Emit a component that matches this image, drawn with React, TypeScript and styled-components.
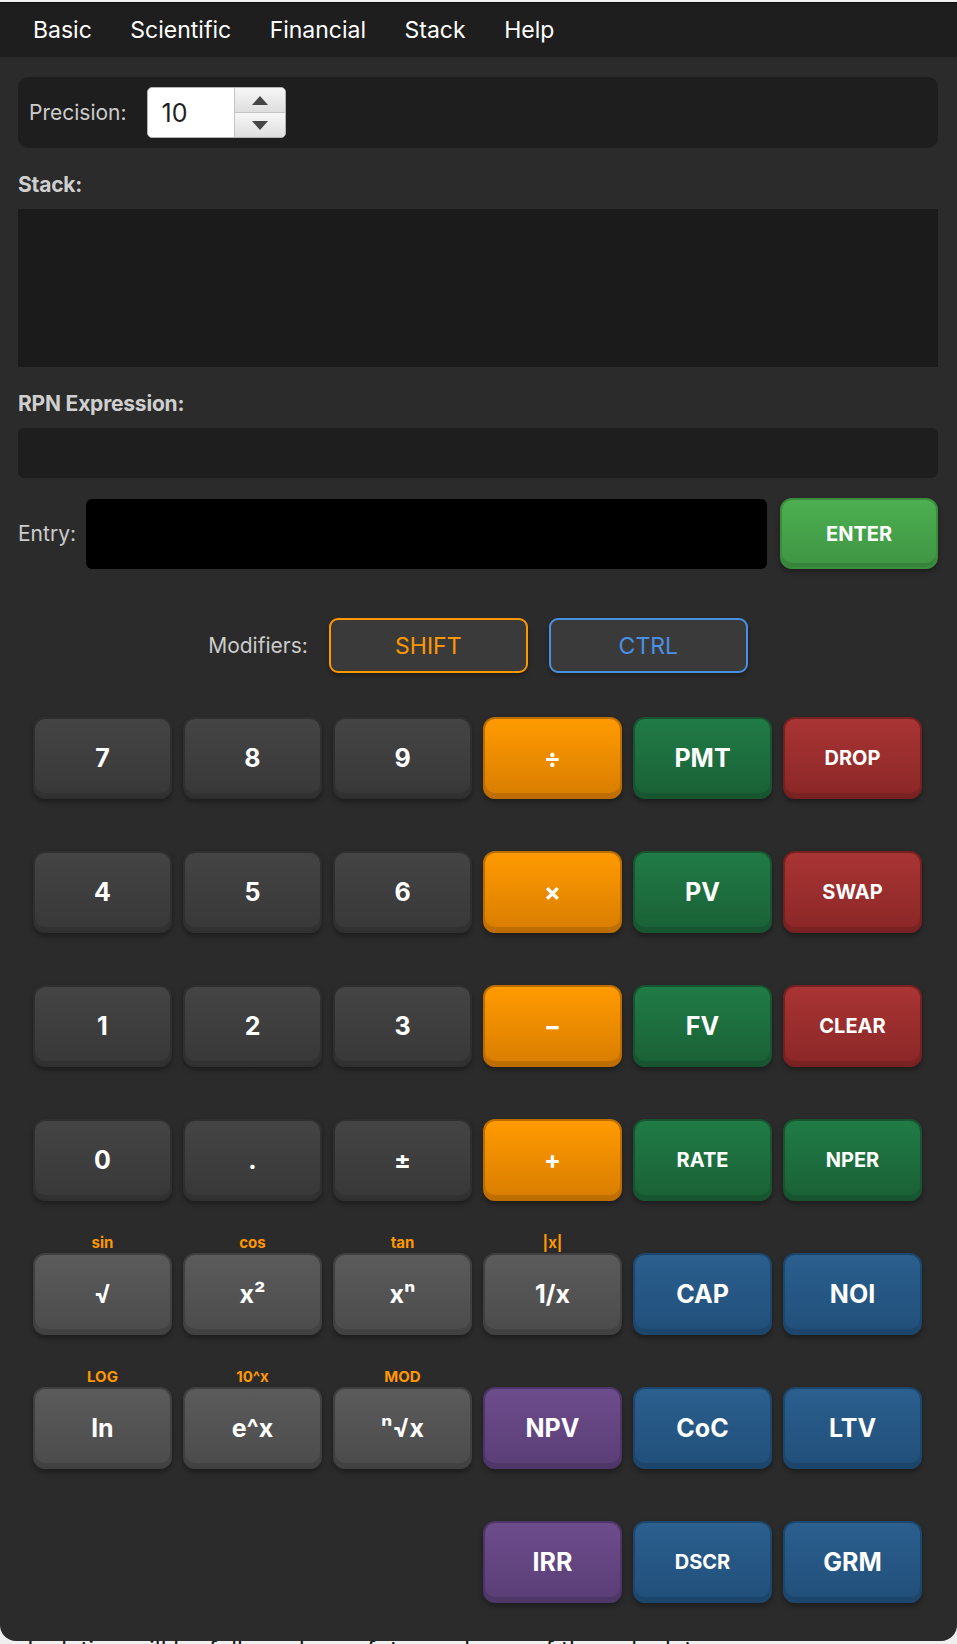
import React from 'react';
import styled, { createGlobalStyle } from 'styled-components';

const GlobalStyle = createGlobalStyle`
  html, body {
    margin: 0;
    padding: 0;
    background: #efefef;
  }
  body {
    font-family: Inter, "Noto Sans", "DejaVu Sans", sans-serif;
  }
  * {
    box-sizing: border-box;
  }
`;

const Window = styled.div`
  position: relative;
  z-index: 1;
  margin-top: 2px;
  width: 957px;
  background: #2b2b2b;
  border-top: 1px solid #0d0d0d;
  border-radius: 0 0 16px 16px;
  overflow: hidden;
`;

const MenuBar = styled.nav`
  height: 54px;
  background: #1e1e1e;
  display: flex;
  align-items: center;
  gap: 38.5px;
  padding-left: 33px;
`;

const MenuItem = styled.span`
  color: #ffffff;
  font-size: 23px;
`;

const Main = styled.main`
  padding: 20px 19px 38px 18px;
`;

const PrecisionPanel = styled.div`
  height: 71px;
  background: #1e1e1e;
  border-radius: 10px;
  display: flex;
  align-items: center;
  gap: 20px;
  padding: 0 11px;
`;

const FieldLabel = styled.span`
  color: #cccccc;
  font-size: 21px;
`;

const Spinner = styled.div`
  display: flex;
  width: 139px;
  height: 51px;
  border: 1px solid #b3b3b3;
  border-radius: 5px;
  overflow: hidden;
  background: #ffffff;
`;

const SpinValue = styled.div`
  flex: 1;
  display: flex;
  align-items: center;
  padding-left: 14px;
  font-size: 25px;
  color: #1f1f1f;
`;

const SpinArrows = styled.div`
  width: 51px;
  display: flex;
  flex-direction: column;
  border-left: 1px solid #c4c4c4;
`;

const SpinArrow = styled.div`
  flex: 1;
  display: flex;
  align-items: center;
  justify-content: center;
  background: linear-gradient(#f7f7f7, #dedede);
  & + & {
    border-top: 1px solid #c4c4c4;
  }
`;

const SectionLabel = styled.div`
  color: #cfcfcf;
  font-size: 21px;
  font-weight: 700;
  letter-spacing: -0.2px;
  line-height: 24px;
  margin: 25px 0 12px;
`;

const StackBox = styled.div`
  height: 158px;
  background: #1b1b1b;
`;

const RpnBox = styled.div`
  height: 50px;
  background: #1e1e1e;
  border-radius: 6px;
`;

const EntryRow = styled.div`
  margin-top: 20px;
  height: 71px;
  display: flex;
  align-items: center;
`;

const EntryLabel = styled(FieldLabel)`
  width: 68px;
`;

const EntryField = styled.div`
  flex: 1;
  height: 70px;
  background: #000000;
  border-radius: 6px;
  margin-right: 13px;
`;

const EnterButton = styled.button`
  width: 158px;
  height: 71px;
  border: 2px solid #3b8c3f;
  border-radius: 12px;
  background: linear-gradient(#4caf50, #3f9543);
  box-shadow: inset 0 -4px 0 rgba(0, 0, 0, 0.12), 0 3px 5px rgba(0, 0, 0, 0.35);
  color: #ffffff;
  font-family: inherit;
  font-size: 20px;
  font-weight: 700;
`;

const ModRow = styled.div`
  margin-top: 49px;
  height: 55px;
  display: flex;
  align-items: center;
  justify-content: center;
  gap: 21px;
`;

const ModButton = styled.button<{ $color: string }>`
  width: 199px;
  height: 55px;
  background: #3a3a3a;
  border: 2px solid ${(p) => p.$color};
  border-radius: 9px;
  box-shadow: 0 3px 4px rgba(0, 0, 0, 0.3);
  color: ${(p) => p.$color};
  font-family: inherit;
  font-size: 23px;
`;

const KeyGrid = styled.div`
  margin-top: 26px;
  padding-left: 15px;
  display: grid;
  grid-template-columns: repeat(6, 139px);
  column-gap: 11px;
  row-gap: 34px;
`;

const KeyCell = styled.div`
  display: flex;
  flex-direction: column;
`;

const ShiftLabel = styled.div`
  height: 16px;
  line-height: 16px;
  margin-bottom: 2px;
  text-align: center;
  color: #ff9800;
  font-size: 15px;
  font-weight: 700;
`;

type Tone = 'num' | 'fn' | 'op' | 'fin' | 'stack' | 're' | 'inv';

const tones: Record<Tone, [string, string, string]> = {
  num: ['#444444', '#383838', '#2f2f2f'],
  fn: ['#5b5b5b', '#4b4b4b', '#404040'],
  op: ['#ff9a00', '#d87d00', '#bb6d00'],
  fin: ['#207b46', '#1a6136', '#17542f'],
  stack: ['#a93434', '#8b2727', '#762121'],
  re: ['#2b5f8e', '#214f7a', '#1d466c'],
  inv: ['#6d4c8c', '#5a3e76', '#4e3567'],
};

const Key = styled.button<{ $tone: Tone; $small?: boolean }>`
  height: 82px;
  border-radius: 12px;
  border: 2px solid ${(p) => tones[p.$tone][2]};
  background: linear-gradient(${(p) => tones[p.$tone][0]}, ${(p) => tones[p.$tone][1]});
  box-shadow: inset 0 -4px 0 rgba(0, 0, 0, 0.12), 0 3px 5px rgba(0, 0, 0, 0.35);
  color: #ffffff;
  font-family: inherit;
  font-size: ${(p) => (p.$small ? '20px' : '25px')};
  font-weight: 700;
  padding: 0;
`;

type KeyDef = { label: string; tone: Tone; small?: boolean; shift?: string } | null;

const rows: KeyDef[][] = [
  [
    { label: '7', tone: 'num' },
    { label: '8', tone: 'num' },
    { label: '9', tone: 'num' },
    { label: '÷', tone: 'op' },
    { label: 'PMT', tone: 'fin' },
    { label: 'DROP', tone: 'stack', small: true },
  ],
  [
    { label: '4', tone: 'num' },
    { label: '5', tone: 'num' },
    { label: '6', tone: 'num' },
    { label: '×', tone: 'op' },
    { label: 'PV', tone: 'fin' },
    { label: 'SWAP', tone: 'stack', small: true },
  ],
  [
    { label: '1', tone: 'num' },
    { label: '2', tone: 'num' },
    { label: '3', tone: 'num' },
    { label: '−', tone: 'op' },
    { label: 'FV', tone: 'fin' },
    { label: 'CLEAR', tone: 'stack', small: true },
  ],
  [
    { label: '0', tone: 'num' },
    { label: '.', tone: 'num' },
    { label: '±', tone: 'num' },
    { label: '+', tone: 'op' },
    { label: 'RATE', tone: 'fin', small: true },
    { label: 'NPER', tone: 'fin', small: true },
  ],
  [
    { label: '√', tone: 'fn', shift: 'sin' },
    { label: 'x²', tone: 'fn', shift: 'cos' },
    { label: 'xⁿ', tone: 'fn', shift: 'tan' },
    { label: '1/x', tone: 'fn', shift: '|x|' },
    { label: 'CAP', tone: 're' },
    { label: 'NOI', tone: 're' },
  ],
  [
    { label: 'ln', tone: 'fn', shift: 'LOG' },
    { label: 'e^x', tone: 'fn', shift: '10^x' },
    { label: 'ⁿ√x', tone: 'fn', shift: 'MOD' },
    { label: 'NPV', tone: 'inv' },
    { label: 'CoC', tone: 're' },
    { label: 'LTV', tone: 're' },
  ],
  [
    null,
    null,
    null,
    { label: 'IRR', tone: 'inv' },
    { label: 'DSCR', tone: 're', small: true },
    { label: 'GRM', tone: 're' },
  ],
];

const Caption = styled.div`
  margin-top: -3px;
  font-size: 24px;
  line-height: 1;
  color: #1a1a1a;
  white-space: nowrap;
`;

const Triangle = ({ up }: { up?: boolean }) => (
  <svg width="16" height="9" viewBox="0 0 16 9">
    <polygon points={up ? '0,9 8,0 16,9' : '0,0 16,0 8,9'} fill="#454545" />
  </svg>
);

export default function App() {
  const menus = ['Basic', 'Scientific', 'Financial', 'Stack', 'Help'];
  return (
    <>
      <GlobalStyle />
      <Window>
        <MenuBar>
          {menus.map((m) => (
            <MenuItem key={m}>{m}</MenuItem>
          ))}
        </MenuBar>
        <Main>
          <PrecisionPanel>
            <FieldLabel>Precision:</FieldLabel>
            <Spinner>
              <SpinValue>10</SpinValue>
              <SpinArrows>
                <SpinArrow>
                  <Triangle up />
                </SpinArrow>
                <SpinArrow>
                  <Triangle />
                </SpinArrow>
              </SpinArrows>
            </Spinner>
          </PrecisionPanel>

          <SectionLabel>Stack:</SectionLabel>
          <StackBox />

          <SectionLabel>RPN Expression:</SectionLabel>
          <RpnBox />

          <EntryRow>
            <EntryLabel>Entry:</EntryLabel>
            <EntryField />
            <EnterButton>ENTER</EnterButton>
          </EntryRow>

          <ModRow>
            <FieldLabel>Modifiers:</FieldLabel>
            <ModButton $color="#ff9800">SHIFT</ModButton>
            <ModButton $color="#4a90e2">CTRL</ModButton>
          </ModRow>

          <KeyGrid>
            {rows.map((row, r) =>
              row.map((k, c) => (
                <KeyCell key={`${r}-${c}`}>
                  <ShiftLabel>{k?.shift ?? ''}</ShiftLabel>
                  {k && (
                    <Key $tone={k.tone} $small={k.small}>
                      {k.label}
                    </Key>
                  )}
                </KeyCell>
              ))
            )}
          </KeyGrid>
        </Main>
      </Window>
      <Caption>calculation will be followed on a future release of the calculator</Caption>
    </>
  );
}
